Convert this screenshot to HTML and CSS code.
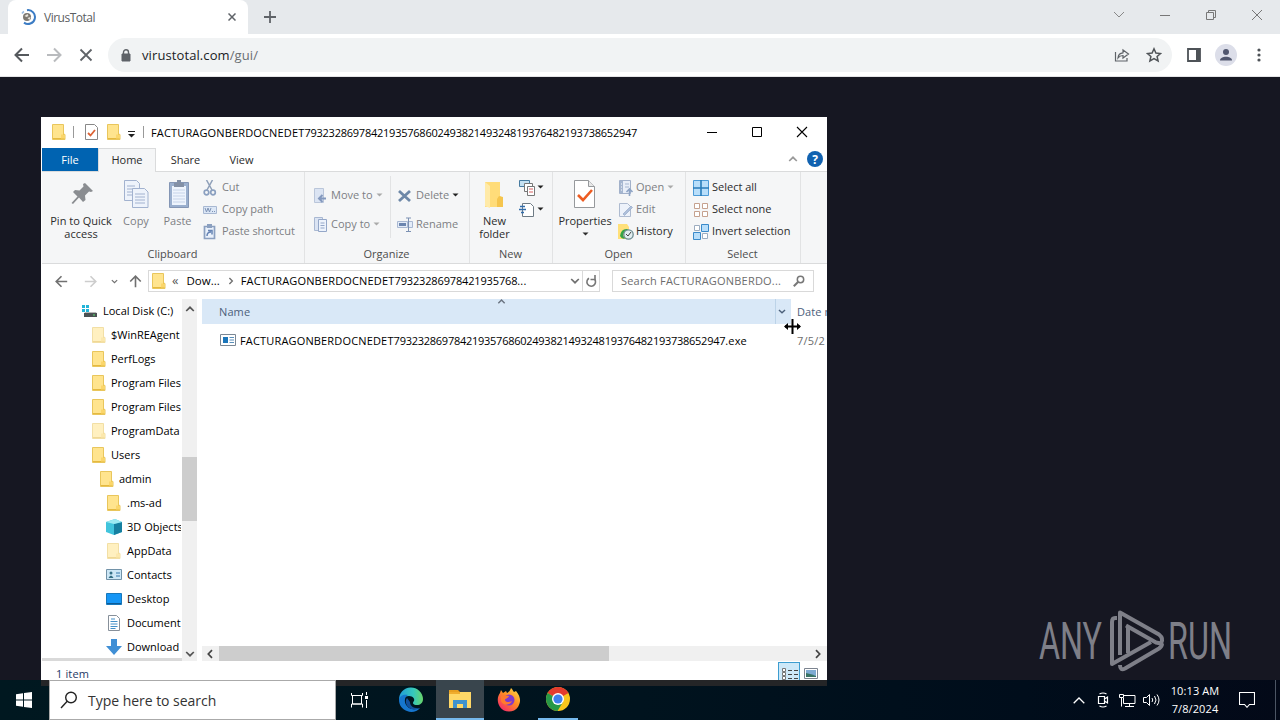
FILE: index.html
```html
<!DOCTYPE html>
<html lang="en">
<head>
<meta charset="utf-8">
<title>VirusTotal</title>
<link rel="stylesheet" href="styles.css">
</head>
<body>
<svg class="defs" width="0" height="0">
  <symbol id="folder" viewBox="0 0 14 16"><path d="M.5.5h11v9.500l1.500.5v5H.5z" fill="#ffe48e" stroke="#e9c65c"/><path d="M1 14.500h11.500M11.500 10v5" stroke="#e5b93f"/><path d="M9 10.500h3.500v4H9z" fill="#fbd66b"/></symbol>
  <symbol id="caret" viewBox="0 0 7 4"><path d="M.5.5h6L3.500 3.500z" fill="currentColor"/></symbol>
  <symbol id="chev" viewBox="0 0 10 6"><path d="M1.200 1 5 4.700 8.800 1" fill="none" stroke="currentColor" stroke-width="1.700"/></symbol>
  <symbol id="arrow" viewBox="0 0 16 16"><path d="M15 8H2M8 1.500 1.500 8 8 14.500" fill="none" stroke="currentColor" stroke-width="2"/></symbol>
</svg>

<header class="browser">
  <div class="tabstrip">
    <div class="tab">
      <svg width="16" height="16" viewBox="0 0 16 16"><path d="M7 1.200A6.900 6.900 0 1 1 4 13.600" fill="none" stroke="#3b7cc4" stroke-width="2"/><path d="M2 4.500a7 7 0 0 1 2-2" fill="none" stroke="#9bbce0" stroke-width="1.500"/><circle cx="7" cy="8" r="4" fill="#7d7870"/><path d="M4.500 7l3-2 1 2-2 1zM7.500 9l3-1-1 3z" fill="#e8e4dc"/></svg>
      <span class="tab-title">VirusTotal</span>
      <svg width="8" height="8" viewBox="0 0 8 8"><path d="M.5.5l7 7M7.500.5l-7 7" stroke="#5f6368" stroke-width="1.500"/></svg>
    </div>
    <svg class="plus" width="12" height="12" viewBox="0 0 12 12"><path d="M6 0v12M0 6h12" stroke="#5f6368" stroke-width="1.800"/></svg>
    <div class="caption">
      <svg width="12" height="12" viewBox="0 0 12 12"><path d="M1 3l5 5 5-5" fill="none" stroke="#888" stroke-width="1"/></svg>
      <svg width="12" height="12" viewBox="0 0 12 12"><path d="M1 6.500h10" stroke="#777"/></svg>
      <svg width="12" height="12" viewBox="0 0 12 12"><path d="M1.500 3.500h7v7h-7zM3.500 3.500v-2h7v7h-2" fill="none" stroke="#777"/></svg>
      <svg width="12" height="12" viewBox="0 0 12 12"><path d="M1 1l10 10M11 1L1 11" stroke="#777"/></svg>
    </div>
  </div>
  <div class="toolbar">
    <svg class="dark" width="16" height="16"><use href="#arrow"/></svg>
    <svg class="pale flip" width="16" height="16"><use href="#arrow"/></svg>
    <svg width="14" height="14" viewBox="0 0 14 14"><path d="M1.500 1.500l11 11M12.500 1.500l-11 11" stroke="#5f6368" stroke-width="1.800"/></svg>
    <div class="omnibox">
      <svg width="10" height="13" viewBox="0 0 10 13"><path d="M1 5h8v7H1z" fill="#5f6368" stroke="#5f6368"/><path d="M2.500 5V3.300a2.500 2.500 0 0 1 5 0V5" fill="none" stroke="#5f6368" stroke-width="1.400"/></svg>
      <span class="url">virustotal.com<i>/gui/</i></span>
      <svg width="16" height="16" viewBox="0 0 16 16"><path d="M1.500 5v9h11.500v-3M4 11c.3-3.500 2-5 5-5.200V3l5.500 4L9 11V8.500C7 8.500 5.500 9 4 11z" fill="none" stroke="#5f6368" stroke-width="1.200"/></svg>
      <svg width="16" height="16" viewBox="0 0 16 16"><path d="M8 1.800l1.900 4.200 4.600.5-3.400 3 1 4.500L8 11.700 3.900 14l1-4.500-3.400-3L6.100 6z" fill="none" stroke="#505458" stroke-width="1.500"/></svg>
    </div>
    <svg class="side" width="14" height="14" viewBox="0 0 14 14"><path d="M1 1h12v12H1z" fill="#fff" stroke="#4d5257" stroke-width="1.800"/><path d="M9 1h4v12H9z" fill="#4d5257"/></svg>
    <svg class="avatar" width="22" height="22" viewBox="0 0 22 22"><circle cx="11" cy="11" r="11" fill="#dcdee9"/><circle cx="11" cy="8" r="3" fill="#50566e"/><path d="M5 16.500c0-5 12-5 12 0z" fill="#50566e"/></svg>
    <svg width="4" height="14" viewBox="0 0 4 14"><g fill="#4d5257"><circle cx="2" cy="2" r="1.600"/><circle cx="2" cy="7" r="1.600"/><circle cx="2" cy="12" r="1.600"/></g></svg>
  </div>
</header>

<svg class="watermark" width="200" height="66" viewBox="0 0 200 66">
  <g fill="#7e7f88"><text x="3" y="51" textLength="63" lengthAdjust="spacingAndGlyphs">ANY</text><text x="132" y="51" textLength="64" lengthAdjust="spacingAndGlyphs">RUN</text></g>
  <g fill="none" stroke="#7e7f88" stroke-width="4" stroke-linejoin="round"><path d="M81 10h-2q-3 0-3 4v42l39-22"/><path d="M84 47V4.500l39 22q5 4 2 9l-5-1-30-17"/><path d="M84 57q0 6 5 3.500l34-20q3-2 3-5M92 19v26"/></g>
</svg>

<main class="window">
  <div class="titlebar">
    <svg width="14" height="16"><use href="#folder"/></svg>
    <b class="bar b1"></b>
    <svg width="13" height="16" viewBox="0 0 13 16"><path d="M.5.5h9l3 3v12H.5z" fill="#fff" stroke="#888"/><path d="M3 9l2.500 2.500L10 6" fill="none" stroke="#dc6335" stroke-width="1.800"/></svg>
    <svg class="f2" width="14" height="16"><use href="#folder"/></svg>
    <svg class="qa" width="7" height="7" viewBox="0 0 7 7"><path d="M0 .5h7" stroke="#222"/><path d="M0 3h7L3.500 6.500z" fill="#222"/></svg>
    <b class="bar b2"></b>
    <span class="title">FACTURAGONBERDOCNEDET<span class="num">7932328697842193576860249382149324819376482193738652947</span></span>
    <div class="controls">
      <svg width="12" height="12" viewBox="0 0 12 12"><path d="M1 6.500h10" stroke="#000"/></svg>
      <svg width="12" height="12" viewBox="0 0 12 12"><path d="M1.500 1.500h9v9h-9z" fill="none" stroke="#000"/></svg>
      <svg width="12" height="12" viewBox="0 0 12 12"><path d="M1 1l10 10M11 1L1 11" stroke="#000" stroke-width="1.100"/></svg>
    </div>
  </div>
  <nav class="tabs">
    <span class="t-file">File</span><span class="t-home">Home</span><span class="t-share">Share</span><span class="t-view">View</span>
    <div class="tabs-right"><svg class="flipv" width="10" height="6"><use href="#chev"/></svg>
    <svg width="16" height="16" viewBox="0 0 16 16"><circle cx="8" cy="8" r="8" fill="#1162b0"/><text x="8" y="12.500" class="q">?</text></svg></div>
  </nav>
  <section class="ribbon">
    <div class="group g-clip">
      <div class="tools">
        <div class="big w-pin"><svg width="32" height="32" viewBox="0 0 32 32"><path d="M20 5l8 8-2 1-2-.4-4 4 .5 4.500L18 24l-4-4.500L8 26l-1.500-1 6-6.500L8 14l2-2 4.500.5 4-4L18 6z" fill="#8a8d91"/></svg>Pin to Quick<br>access</div>
        <div class="big w-copy off"><svg width="32" height="32" viewBox="0 0 32 32"><g fill="#eef3fb" stroke="#a2b2cf"><path d="M4.500 2.500h12l3 3v17h-15z"/><path d="M7 8h8M7 11h8M7 14h8M7 17h8"/><path d="M12.500 10.500h12l3.500 3.500v15.500H12.500z"/><path d="M15 16h10M15 19h10M15 22h10M15 25h10"/></g></svg>Copy</div>
        <div class="big w-paste off"><svg width="32" height="32" viewBox="0 0 32 32"><path d="M7.500 4.500h19v25h-19z" fill="#9aafce" stroke="#8496b5"/><path d="M10 8h14v19H10z" fill="#eef4fd"/><path d="M12 5h10v4H12zM15 2h4v4h-4z" fill="#8390a6"/><path d="M11 12h12M11 15h12M11 18h12M11 21h12M11 24h12" stroke="#c6d3e8"/></svg>Paste</div>
        <div class="list off">
          <div><svg width="16" height="16" viewBox="0 0 16 16"><path d="M3.500 0l5.500 10M9.500 0L4 10" stroke="#8fa0b9" stroke-width="1.500"/><g fill="none" stroke="#8ba0c0" stroke-width="1.700"><circle cx="3.500" cy="12.500" r="2.300"/><circle cx="10" cy="12.500" r="2.300"/></g></svg>Cut</div>
          <div><svg width="16" height="16" viewBox="0 0 16 16"><path d="M.5 4.500h13v7H.5z" fill="#dce7f6" stroke="#a8b8d2"/><path d="M2 6l1.500 4L5 6l1.500 4L8 6M9 9.500h1M11 9.500h1" fill="none" stroke="#7e93b5"/></svg>Copy path</div>
          <div><svg width="16" height="16" viewBox="0 0 16 16"><path d="M1.500 2.500h10v12h-10z" fill="#eaf1fb" stroke="#8ba0c0" stroke-width="1.700"/><path d="M4 0h5v4H4z" fill="#8ba0c0"/><path d="M4 12q0-4 4-4M5 6.500h4v4" fill="none" stroke="#6684b4" stroke-width="1.500"/></svg>Paste shortcut</div>
        </div>
      </div>
      <div class="label">Clipboard</div>
    </div>
    <div class="group g-org">
      <div class="tools">
        <div class="list org off o1">
          <div><svg width="16" height="16" viewBox="0 0 16 16"><path d="M2.500.5h9v14h-9z" fill="#dbe4f3" stroke="#bac6da"/><path d="M14 10.500H8M10.500 7L7 10.500l3.500 3.500" fill="none" stroke="#8499be" stroke-width="2"/></svg>Move to<svg class="car" width="7" height="4"><use href="#caret"/></svg></div>
          <div><svg width="16" height="16" viewBox="0 0 16 16"><path d="M2.500.5h8v13h-8z" fill="#dbe4f3" stroke="#a9b8d2"/><path d="M6.500 2.500h8v12h-8z" fill="#edf3fc" stroke="#94a7c8"/><path d="M8.500 6h4M8.500 8.500h4M8.500 11h4" stroke="#94a7c8"/></svg>Copy to<svg class="car" width="7" height="4"><use href="#caret"/></svg></div>
        </div>
        <div class="list org off o2">
          <div><svg width="16" height="16" viewBox="0 0 16 16"><path d="M2 3l11 10M13 3L2 13" stroke="#6e88a8" stroke-width="2.800"/></svg>Delete<svg class="car blk" width="7" height="4"><use href="#caret"/></svg></div>
          <div><svg width="16" height="16" viewBox="0 0 16 16"><path d="M.5 4.500h10v6H.5zM12 4.500h3.500v6H12" fill="#e4ecf8" stroke="#a9b8d2"/><path d="M2 7.500h7" stroke="#6c86b0" stroke-width="3"/><path d="M9 1h5M11.500 1v13M9 14.500h5" stroke="#7c91b3"/></svg>Rename</div>
        </div>
      </div>
      <div class="label">Organize</div>
    </div>
    <div class="group g-new">
      <div class="tools">
        <div class="big w-new"><svg width="32" height="32" viewBox="0 0 32 32"><path d="M6 4h15v14l3 2v9H6z" fill="#ffdc79"/><path d="M6 4l5 4v22l-5-2z" fill="#ffeaa8"/><path d="M20 18l4 1v10h-6v-8z" fill="#f5c54e"/></svg>New<br>folder</div>
        <div class="list">
          <div><svg width="17" height="16" viewBox="0 0 17 16"><path d="M.5.5h10v6H.5z" fill="#c5e1f2" stroke="#477ba0"/><path d="M5.500 3.500h8v8h-8z" fill="#fff" stroke="#777"/><path d="M8.500 6.500h7v9h-7z" fill="#fff" stroke="#777"/><path d="M10 9h4M10 12h4" stroke="#e59797" stroke-width="1.500"/></svg><svg class="car blk" width="7" height="4"><use href="#caret"/></svg></div>
          <div><svg width="17" height="16" viewBox="0 0 17 16"><path d="M3.500 1.500h8l3 3v10h-11z" fill="#fff" stroke="#6e7b85"/><path d="M0 7.500h7M1 4.500h5M2 10.500h3" stroke="#316dac" stroke-width="1.400"/></svg><svg class="car blk" width="7" height="4"><use href="#caret"/></svg></div>
        </div>
      </div>
      <div class="label">New</div>
    </div>
    <div class="group g-open">
      <div class="tools">
        <div class="big w-prop"><svg width="32" height="32" viewBox="0 0 32 32"><path d="M5.500 2.500h14l6 6v21h-20z" fill="#fff" stroke="#96999c"/><path d="M19.500 2.500v6h6" fill="#e8e8e8" stroke="#96999c"/><path d="M9 17l5 5 9-10" fill="none" stroke="#ed5c22" stroke-width="2.600"/></svg>Properties<svg class="pc" width="7" height="4"><use href="#caret"/></svg></div>
        <div class="list opn">
          <div class="off"><svg width="16" height="16" viewBox="0 0 16 16"><path d="M1.500.5h11v13h-11z" fill="#e8eef8" stroke="#a2b1ca"/><path d="M2 1h3v12H2z" fill="#a5b6d0"/><path d="M7 4h4M7 7h4" stroke="#a5b6d0"/><path d="M3 4h1M3 7h1M3 10h1" stroke="#fff"/><path d="M11.500 16v-6M8.500 12l3-3 3 3" fill="none" stroke="#8ea4c5" stroke-width="1.600"/></svg>Open<svg class="car" width="7" height="4"><use href="#caret"/></svg></div>
          <div class="off"><svg width="16" height="16" viewBox="0 0 16 16"><path d="M1.500 1.500h8l3 3v10h-11z" fill="#edf2fa" stroke="#aebbd0"/><path d="M5 12l8-8 1.500 1.500-8 8z" fill="#aebfda" stroke="#8da2c4" stroke-width=".6"/></svg>Edit</div>
          <div><svg width="16" height="16" viewBox="0 0 16 16"><path d="M0 0h9l2 3v12H0z" fill="#ffe07a"/><path d="M2 12q1-8 8-7l-1 3q-4 0-4 4l3 2q-4 2-6-2z" fill="#36a447"/><circle cx="10.500" cy="10.500" r="4.700" fill="#e1edf0" stroke="#6c8b91" stroke-width="1.300"/><path d="M8 10l2 2 3-4" fill="none" stroke="#444"/></svg>History</div>
        </div>
      </div>
      <div class="label">Open</div>
    </div>
    <div class="group g-sel">
      <div class="tools"><div class="list">
        <div><svg width="16" height="16" viewBox="0 0 16 16"><path d="M.5.5h15v15H.5z" fill="#b8defa" stroke="#4d9bd7"/><path d="M8 0v16M0 8h16" stroke="#287cba" stroke-width="1.600"/></svg>Select all</div>
        <div><svg width="16" height="16" viewBox="0 0 16 16"><path d="M1.500 1.500h5v5h-5zM9.500 1.500h5v5h-5zM1.500 9.500h5v5h-5zM9.500 9.500h5v5h-5z" fill="#fff" stroke="#c5a18e"/></svg>Select none</div>
        <div><svg width="16" height="16" viewBox="0 0 16 16"><path d="M1.500 1.500h5v5h-5zM9.500 9.500h5v5h-5z" fill="#fff" stroke="#9cadc0"/><path d="M8.500.5h7v7h-7zM.5 8.500h7v7h-7z" fill="#b8defa" stroke="#3a8aca"/></svg>Invert selection</div>
      </div></div>
      <div class="label">Select</div>
    </div>
  </section>
  <div class="address">
    <svg class="gray" width="13" height="13"><use href="#arrow"/></svg>
    <svg class="faint flip" width="13" height="13"><use href="#arrow"/></svg>
    <svg class="gray" width="7" height="5"><use href="#chev"/></svg>
    <svg class="gray up" width="13" height="13"><use href="#arrow"/></svg>
    <div class="path">
      <svg width="14" height="16"><use href="#folder"/></svg>
      <span class="laq">«</span><span class="dow">Dow...</span>
      <svg class="gray right" width="8" height="6"><use href="#chev"/></svg>
      <span class="crumb">FACTURAGONBERDOCNEDET<span class="num">79323286978421935768</span>...</span>
      <svg class="gray" width="10" height="6"><use href="#chev"/></svg>
      <span class="reload"><svg width="12" height="13" viewBox="0 0 12 13"><path d="M9.800 4.500A4.300 4.300 0 1 1 4 3.200" fill="none" stroke="#777" stroke-width="1.600"/><path d="M10 0v4.500H5.500" fill="none" stroke="#777" stroke-width="1.600"/></svg></span>
    </div>
    <div class="find"><span>Search FACTURAGONBERDO...</span><svg width="12" height="12" viewBox="0 0 12 12"><circle cx="7.500" cy="4.500" r="3.200" fill="none" stroke="#777" stroke-width="1.500"/><path d="M5 7L.8 11.200" stroke="#777" stroke-width="2"/></svg></div>
  </div>
  <div class="content">
    <aside class="tree">
      <div class="l0"><svg width="16" height="14" viewBox="0 0 16 14"><path d="M1 1h3v3H1zM5 1h3v3H5zM1 5h3v3H1zM5 5h3v3H5z" fill="#22b4d8"/><path d="M4 8h11l1 2H3z" fill="#b7b7b7"/><path d="M3 9h13v4H3z" fill="#4b5153"/><path d="M12 11h2" stroke="#5be26f"/></svg><span>Local Disk (C:)</span></div>
      <div class="l1"><svg class="dim" width="14" height="16"><use href="#folder"/></svg><span>$WinREAgent</span></div>
      <div class="l1"><svg width="14" height="16"><use href="#folder"/></svg><span>PerfLogs</span></div>
      <div class="l1"><svg width="14" height="16"><use href="#folder"/></svg><span>Program Files</span></div>
      <div class="l1"><svg width="14" height="16"><use href="#folder"/></svg><span>Program Files</span></div>
      <div class="l1"><svg class="dim" width="14" height="16"><use href="#folder"/></svg><span>ProgramData</span></div>
      <div class="l1"><svg width="14" height="16"><use href="#folder"/></svg><span>Users</span></div>
      <div class="l2"><svg width="14" height="16"><use href="#folder"/></svg><span>admin</span></div>
      <div class="l3"><svg width="14" height="16"><use href="#folder"/></svg><span>.ms-ad</span></div>
      <div class="l3 wide"><svg width="16" height="16" viewBox="0 0 16 16"><path d="M0 3l9-3 7 3v10l-8 3-8-3z" fill="#41c4dc"/><path d="M8 5l8-2v10l-8 3z" fill="#167fa0"/><path d="M0 3l9-3 7 3-8 2z" fill="#9ceaf2"/></svg><span>3D Objects</span></div>
      <div class="l3"><svg class="dim" width="14" height="16"><use href="#folder"/></svg><span>AppData</span></div>
      <div class="l3 wide"><svg width="16" height="12" viewBox="0 0 16 12"><path d="M.5.5h15v10H.5z" fill="#cde7f6" stroke="#7292a8"/><circle cx="5" cy="4" r="1.500" fill="#356f86"/><path d="M2.500 9q2.500-5 5 0z" fill="#356f86"/><path d="M10 4h4M10 7h4" stroke="#3477aa"/></svg><span>Contacts</span></div>
      <div class="l3 wide"><svg width="16" height="12" viewBox="0 0 16 12"><path d="M.5.5h15v11H.5z" fill="#1696f5" stroke="#1878bb"/><path d="M1 10.500h14" stroke="#0c5b96"/></svg><span>Desktop</span></div>
      <div class="l3 docs"><svg width="12" height="16" viewBox="0 0 12 16"><path d="M.5.5h8l3 3v12H.5z" fill="#fff" stroke="#87909a"/><path d="M3 4h4M2.500 6.500h7M2.500 9h7M2.500 11.500h7M2.500 13.500h5" stroke="#4590c8"/></svg><span>Document</span></div>
      <div class="l3 wide"><svg width="16" height="16" viewBox="0 0 16 16"><path d="M5 0h6v7h5l-8 9-8-9h5z" fill="#408fd5"/></svg><span>Download</span></div>
    </aside>
    <div class="vscroll"><svg class="flipv" width="10" height="6"><use href="#chev"/></svg><i></i><svg width="10" height="6"><use href="#chev"/></svg></div>
    <div class="files">
      <div class="cols"><div class="name"><span>Name</span><svg class="sort flipv" width="9" height="5"><use href="#chev"/></svg><em><svg width="8" height="5"><use href="#chev"/></svg></em></div><div class="date">Date m</div></div>
      <div class="file"><svg width="16" height="12" viewBox="0 0 16 12"><path d="M.5.5h15v11H.5z" fill="#fff" stroke="#7a8794"/><path d="M3 3h5v6H3z" fill="#1c76ba"/><path d="M9.500 3.500H14M9.500 6H14M9.500 8.500H14" stroke="#5a8fba"/></svg><span class="fname">FACTURAGONBERDOCNEDET<span class="num">7932328697842193576860249382149324819376482193738652947</span>.exe</span><span class="fdate">7/5/2</span></div>
      <div class="hscroll"><svg class="left" width="10" height="6"><use href="#chev"/></svg><i></i><svg class="right" width="10" height="6"><use href="#chev"/></svg></div>
    </div>
  </div>
  <footer class="status"><span>1 item</span>
    <div class="v1"><svg width="20" height="20" viewBox="0 0 20 20"><path d="M3.500 5.500h3v3h-3zM3.500 9.500h3v3h-3zM3.500 13.500h3v3h-3z" fill="#fff" stroke="#777"/><path d="M9 7.500h4M15 7.500h4M9 11.500h4M15 11.500h4M9 15.500h4M15 15.500h4" stroke="#444"/></svg></div>
    <svg class="v2" width="14" height="11" viewBox="0 0 14 11"><path d="M.5.5h13v10H.5z" fill="#fff" stroke="#7c8490"/><path d="M2 2h10v7H2z" fill="#7eaad2"/><path d="M2 5q5 1 10 3v1H2z" fill="#397364"/></svg>
  </footer>
</main>
<svg class="cursor" width="17" height="17" viewBox="0 0 17 17"><path d="M8.500 1v15M1 8.500h15" stroke="#000" stroke-width="2"/><path d="M0 8.500L4 5v7zM17 8.500L13 5v7z"/></svg>

<div class="taskbar">
  <div class="start"><svg width="16" height="16" viewBox="0 0 16 16"><path d="M0 2.300L7 1.300V7.500H0zM8 1.100L16 0v7.500H8zM0 8.500h7v6.200l-7-1zM8 8.500h8V16L8 14.900z" fill="#fff"/></svg></div>
  <div class="tsearch"><svg width="18" height="18" viewBox="0 0 18 18"><circle cx="11" cy="6.500" r="5.300" fill="none" stroke="#222" stroke-width="1.400"/><path d="M7.200 10.300L1 17" stroke="#222" stroke-width="1.400"/></svg><span>Type here to search</span></div>
  <div class="app task-view"><svg width="17" height="16" viewBox="0 0 17 16"><path d="M.5 1v2.500h11V1M.5 15.500V12h11v3.500M1.500 3.500h9v8.500h-9zM15.500 0v3M15.500 8v8" fill="none" stroke="#fff"/><path d="M14 4h3v3h-3z" fill="#fff"/></svg></div>
  <div class="app"><svg width="26" height="26" viewBox="0 0 26 26"><defs><linearGradient id="eg" x1="0" x2="1"><stop offset="0" stop-color="#209cdb"/><stop offset=".6" stop-color="#36c8bb"/><stop offset="1" stop-color="#69d66a"/></linearGradient></defs><path d="M1 13a12 12 0 0 1 24-1c0 4-3 6-6 6-4 0-5-2-3-4 1-2-1-5-5-5-5 0-8 3-10 4z" fill="url(#eg)"/><path d="M1 13c0-4 5-6 9-5-4 2-4 8-1 11 3 4 8 4 13 2-3 4-9 5-13 3-5-2-8-6-8-11z" fill="#1676ce"/><path d="M9 11c-3 4 0 9 4 11 4 1 7 0 9-1-6 1-10-2-10-6z" fill="#12509c"/></svg></div>
  <div class="app active"><svg width="24" height="20" viewBox="0 0 24 20"><path d="M1 1h9l2 2h-11z" fill="#e8a020"/><path d="M1 3h22v16H1z" fill="#ffd867"/><path d="M1 3h11v2H1z" fill="#f0ad2e"/><path d="M5 19v-8h14v8h-4v-4H9v4z" fill="#4193cd"/></svg></div>
  <div class="app"><svg width="24" height="24" viewBox="0 0 24 24"><defs><linearGradient id="fg" x1="1" x2=".2" y2="1"><stop offset="0" stop-color="#ffe34a"/><stop offset=".5" stop-color="#ff8a24"/><stop offset="1" stop-color="#f5276c"/></linearGradient></defs><path d="M3 5l1-3 2 3 3-2 1 2c2-1 3-2 4-5 2 2 2 3 3 4l2-1c5 6 5 11 2 16-4 6-14 6-18 0C0 14 0 9 3 5z" fill="url(#fg)"/><circle cx="12" cy="12" r="5.500" fill="#8039cc"/><path d="M4 8c3-2 5 0 8 0-1 3-4 2-4 4s4 3 7 1c-2 5-9 5-11 0z" fill="#ff7a2d"/></svg></div>
  <div class="app running"><svg width="24" height="24" viewBox="0 0 24 24"><circle cx="12" cy="12" r="12" fill="#f8c51c"/><path d="M12 12L1.600 6A12 12 0 0 1 22.400 6z" fill="#e33b2e"/><path d="M1.600 6A12 12 0 0 0 11.500 24L17 15z" fill="#279847"/><circle cx="12" cy="12" r="6" fill="#fff"/><circle cx="12" cy="12" r="4.600" fill="#3f80ed"/></svg></div>
  <div class="tray">
    <svg width="12" height="7" viewBox="0 0 12 7"><path d="M.7 6.300L6 1l5.300 5.300" fill="none" stroke="#fff" stroke-width="1.300"/></svg>
    <svg class="t2" width="12" height="16" viewBox="0 0 12 16"><path d="M1.500 4.500h6v7h-6zM7.500 7l3-2v6l-3-2M2.500 2q3.500-2 7 0M2.500 14q3.500 2 7 0" fill="none" stroke="#fff" stroke-width="1.200"/></svg>
    <svg class="t3" width="17" height="14" viewBox="0 0 17 14"><path d="M5 2.500h11v8H4.500V5M.5 1.500h4v3h-4zM2.500 4.500v9M6 13.500h9M10.500 10.500v3" fill="none" stroke="#fff"/></svg>
    <svg class="t4" width="17" height="14" viewBox="0 0 17 14"><path d="M.5 4.500h3l3-3v11l-3-3h-3zM9 5q1.500 2 0 4M11.500 3q3 4 0 8M14 1.500q4 5.500 0 11" fill="none" stroke="#fff"/></svg>
    <div class="clock"><span>10:13 AM</span><span>7/8/2024</span></div>
    <svg class="t5" width="16" height="16" viewBox="0 0 16 16"><path d="M.5.5h15v12h-5L8 15.300 5.500 12.500h-5z" fill="none" stroke="#fff" stroke-width="1.100"/></svg>
    <b></b>
  </div>
</div>
</body>
</html>
```
FILE: styles.css
```css
* { box-sizing: border-box; }
body { margin: 0; width: 1280px; height: 720px; overflow: hidden; background: #161722; font: 11px/13px "Open Sans", "Noto Sans", sans-serif; color: #000; position: relative; }
svg { display: block; flex: none; }
i, em { font-style: normal; }
.defs { position: absolute; }
.flip { transform: scaleX(-1); }
.flipv { transform: scaleY(-1); }
.up { transform: rotate(90deg); }
.right { transform: rotate(-90deg); }
.left { transform: rotate(90deg); }
.dark { color: #55595d; }
.pale { color: #b9bbbe; }
.gray { color: #707070; }
.faint { color: #cdcdcd; }

/* browser */
.browser { height: 77px; background: #fff; border-bottom: 1px solid #e4e4e6; }
.tabstrip { height: 34px; background: #e6e9ec; display: flex; align-items: center; padding-left: 8px; }
.tab { align-self: stretch; width: 240px; background: #fff; border-radius: 8px 8px 0 0; display: flex; align-items: center; padding: 0 12px; }
.tab-title { flex: 1; margin-left: 8px; color: #5b5e62; font-size: 12px; letter-spacing: -.5px; }
.plus { margin-left: 16px; }
.caption { margin: -5px 17px 0 auto; display: flex; gap: 34px; }
.toolbar { height: 42px; display: flex; align-items: center; padding: 0 19px 0 14px; }
.toolbar > svg:nth-child(2) { margin: 0 17px 0 16px; }
.omnibox { width: 1064px; height: 34px; border-radius: 17px; background: #f1f3f4; margin-left: 15px; padding: 0 10px 0 13px; display: flex; align-items: center; gap: 16px; }
.url { flex: 1; font-size: 13px; color: #202124; margin-left: -5px; letter-spacing: .1px; }
.url i { color: #6a6e72; }
.side { margin-left: 15px; }
.avatar { margin: 0 20px 0 14px; }

/* watermark */
.watermark { position: absolute; left: 1036px; top: 608px; }
.watermark text { font: 400 52px Roboto, sans-serif; }

/* explorer window */
.window { position: absolute; left: 41px; top: 117px; width: 786px; height: 569px; background: #fff; display: flex; flex-direction: column; overflow: hidden; padding-left: 1px; }
.titlebar { height: 31px; display: flex; align-items: center; padding: 0 0 1px 10px; }
.bar { width: 1px; height: 12px; background: #999; }
.b1 { margin: 0 11px 0 7px; }
.f2 { margin-left: 9px; }
.qa { margin: 4px 8px 0 7px; }
.b2 { margin-right: 7px; }
.title { white-space: nowrap; letter-spacing: .15px; }
.num { letter-spacing: -.24px; }
.fname .num { letter-spacing: -.26px; }
.controls { margin: 0 19px 0 auto; display: flex; gap: 33px; }
.tabs { height: 24px; display: flex; line-height: 24px; text-align: center; border-bottom: 1px solid #dadbdc; color: #2b2b2b; }
.t-file { width: 56px; height: 23px; background: #0063b1; color: #fff; }
.t-home { width: 58px; height: 24px; background: #f5f6f7; border: 1px solid #dadbdc; border-bottom: 0; line-height: 22px; }
.t-share { width: 59px; }
.t-view { width: 53px; }
.tabs-right { margin: -1px 4px 0 auto; display: flex; align-items: center; gap: 9px; color: #999; }
.q { font: bold 12px "Open Sans", sans-serif; fill: #fff; text-anchor: middle; }
.ribbon { height: 92px; background: #f5f6f7; border-bottom: 1px solid #dadbdc; display: flex; color: #2c2c2c; }
.group { border-right: 1px solid #e2e3e4; display: flex; flex-direction: column; }
.tools { height: 73px; padding-top: 4px; display: flex; }
.label { text-align: center; color: #4d4d4d; line-height: 18px; padding-right: 1px; }
.g-clip { width: 263px; }
.g-org { width: 165px; }
.g-new { width: 83px; }
.g-open { width: 133px; }
.g-sel { width: 115px; }
.big { display: flex; flex-direction: column; align-items: center; text-align: center; padding-top: 2px; white-space: nowrap; }
.big svg { margin-bottom: 4px; }
.big .pc { margin: 5px 0 0; }
.off { color: #7d7f84; }
.w-pin { width: 78px; }
.w-copy { width: 32px; }
.w-paste { width: 51px; }
.w-new { width: 49px; }
.w-prop { width: 64px; }
.list > div { height: 22px; display: flex; align-items: center; gap: 3px; padding-bottom: 1px; white-space: nowrap; }
.list > div > svg:first-child { transform: translateY(1px); }
.g-clip .list { letter-spacing: -.08px; }
.car { margin-left: 1px; color: #aaa; }
.blk { color: #222; }
.org { padding-top: 5px; }
.org > div { height: 29px; padding-bottom: 2px; }
.o1 { width: 86px; padding-left: 7px; border-right: 1px solid #e2e3e4; height: 62px; }
.o2 { padding-left: 6px; }
.o2 .blk { margin-left: 0; }
.o1 .car { margin-left: 0; }
.g-new .list div { gap: 0; }
.g-open .list { margin-left: 1px; }
.g-open .list > div { gap: 2px; }
.g-sel .list { margin-left: 7px; }

/* address bar */
.address { height: 35px; display: flex; align-items: center; padding: 0 0 1px 13px; }
.address > svg:nth-child(2) { margin-left: 16px; }
.address > svg:nth-child(3) { margin: 0 11px 0 14px; }
.path { margin-left: 6px; width: 452px; height: 22px; border: 1px solid #d9d9d9; display: flex; align-items: center; padding-left: 3px; }
.path > span:not(.reload), .find span { padding-bottom: 2px; }
.laq { margin-left: 6px; font-size: 13px; color: #555; }
.dow { margin: 0 7px 0 8px; font-size: 11.500px; }
.crumb { margin-left: 6px; flex: 1; white-space: nowrap; letter-spacing: .17px; }
.crumb .num { letter-spacing: -.15px; }
.reload { border-left: 1px solid #d9d9d9; height: 20px; width: 17px; margin-left: 2px; display: flex; align-items: center; justify-content: center; }
.find { margin-left: 12px; width: 202px; height: 22px; border: 1px solid #d9d9d9; display: flex; align-items: center; justify-content: space-between; padding: 0 8px; color: #6d6d6d; white-space: nowrap; letter-spacing: .2px; }

/* content */
.content { height: 362px; display: flex; }
.tree { width: 140px; overflow: hidden; border-bottom: 3px solid #d9d9d9; padding-right: 1px; margin-top: -1px; height: 363px; }
.tree div { height: 24px; display: flex; align-items: center; gap: 5px; white-space: nowrap; overflow: hidden; }
.tree svg { transform: translateY(1px); }
.tree .l0 { padding-left: 39px; gap: 6px; }
.tree .l1 { padding-left: 50px; }
.tree .l2 { padding-left: 58px; }
.tree .l3 { padding-left: 65px; gap: 6px; }
.tree .wide { padding-left: 64px; gap: 5px; }
.tree .docs { padding-left: 66px; gap: 7px; }
.dim { opacity: .55; }
.vscroll { width: 15px; background: #f0f0f0; display: flex; flex-direction: column; align-items: center; padding: 7px 0 4px; color: #555; }
.vscroll i { width: 15px; height: 64px; background: #cdcdcd; margin: 145px 0 auto; }
.files { margin-left: 5px; width: 625px; display: flex; flex-direction: column; overflow: hidden; }
.cols { display: flex; height: 25px; line-height: 25px; color: #4c607a; white-space: nowrap; letter-spacing: .1px; }
.name { width: 589px; background: #d9e8f7; padding-left: 17px; display: flex; flex: none; }
.sort { margin-left: 247px; color: #6a7380; }
.name em { margin-left: auto; width: 16px; border-left: 1px solid #bcd3e8; display: flex; align-items: center; padding-left: 2px; }
.date { margin-left: 6px; width: 30px; flex: none; overflow: hidden; }
.file { height: 24px; margin-top: 4px; display: flex; align-items: center; padding-left: 18px; white-space: nowrap; }
.fname { margin-left: 4px; width: 557px; flex: none; letter-spacing: .16px; }
.fdate { color: #6d6d6d; letter-spacing: .2px; }
.hscroll { margin-top: auto; height: 15px; background: #f0f0f0; display: flex; align-items: center; padding: 0 4px 0 3px; color: #444; }
.hscroll i { width: 390px; height: 15px; background: #cdcdcd; margin: 0 auto 0 4px; }
.status { height: 25px; display: flex; align-items: center; padding-left: 14px; color: #1e3a66; letter-spacing: .15px; }
.v1 { width: 22px; height: 24px; margin-left: auto; background: #cde8f8; border: 1px solid #3d9dd0; }
.v2 { margin: 0 9px 0 4px; }
.cursor { position: absolute; left: 784px; top: 318px; }

/* taskbar */
.taskbar { position: absolute; left: 0; top: 680px; width: 1280px; height: 40px; display: flex; background: linear-gradient(#242527, #242527) 41px 0 / 786px 6px no-repeat, linear-gradient(90deg, #001820, #00131e 50%, #000d1b 80%, #030918); color: #fff; }
.start { width: 49px; padding-right: 2px; display: flex; align-items: center; justify-content: center; }
.tsearch { width: 287px; background: #fff; border: 1px solid #aaa; display: flex; align-items: center; padding-left: 10px; gap: 10px; color: #333; font-size: 14px; letter-spacing: -.03px; }
.app { width: 50px; display: flex; align-items: center; justify-content: center; }
.app.task-view { padding-right: 3px; }
.app.active { background: #39454d; width: 48px; border-bottom: 2px solid #76b9ed; }
.app.running { width: 40px; margin-left: 4px; border-bottom: 2px solid #76b9ed; }
.tray { margin-left: auto; display: flex; align-items: center; }
.t2 { margin-left: 12px; }
.t3 { margin-left: 10px; }
.t4 { margin-left: 7px; }
.clock { width: 62px; margin: 0 0 1px 4px; display: flex; flex-direction: column; align-items: center; line-height: 18px; white-space: nowrap; letter-spacing: .1px; }
.t5 { margin-left: 13px; }
.tray b { width: 1px; height: 40px; margin: 0 4px 0 20px; background: #4c5564; }
```
